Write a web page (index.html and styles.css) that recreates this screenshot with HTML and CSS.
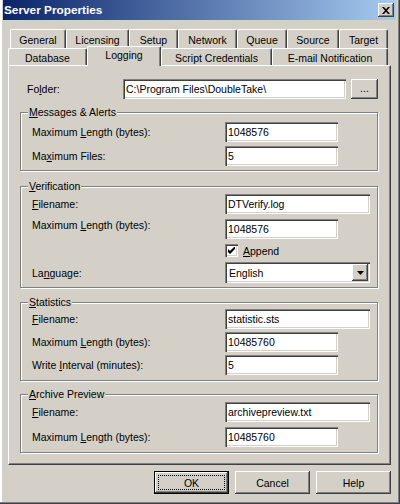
FILE: index.html
```html
<!DOCTYPE html>
<html>
	<head>
		<meta charset="UTF-8">
		<title>Server Properties</title>
		<link rel="stylesheet" href="styles.css">
	</head>
	<body>
		<div class="window">
			<div class="titlebar">
				<span class="title">Server Properties</span>
				<span class="close">
					<svg width="8" height="7" viewBox="0 0 8 7"><path d="M0 0h2l2 2.2 2-2.2h2l-3 3.5 3 3.5h-2l-2-2.2-2 2.2h-2l3-3.5z" fill="#000"/></svg>
				</span>
			</div>

			<div class="tabs">
				<div class="tabrow back">
					<div class="tab w56">General</div>
					<div class="tab w63">Licensing</div>
					<div class="tab w49">Setup</div>
					<div class="tab w59">Network</div>
					<div class="tab w50">Queue</div>
					<div class="tab w52">Source</div>
					<div class="tab w49">Target</div>
				</div>
				<div class="tabrow front">
					<div class="tab w79">Database</div>
					<div class="tab w74 active">Logging</div>
					<div class="tab w111">Script Credentials</div>
					<div class="tab w116">E-mail Notification</div>
				</div>
			</div>

			<div class="panel">
				<div class="folder-row">
					<span class="folder-lbl">Fo<u>l</u>der:</span>
					<input class="field w223" type="text" value="C:\Program Files\DoubleTake\" readonly>
					<span class="btn browse">...</span>
				</div>

				<!-- Messages & Alerts -->
				<div class="group g-msg">
					<span class="legend"><u>M</u>essages &amp; Alerts</span>
					<div class="row">
						<span class="lbl">Maximum <u>L</u>ength (bytes):</span>
						<input class="field short" type="text" value="1048576" readonly>
					</div>
					<div class="row">
						<span class="lbl">Ma<u>x</u>imum Files:</span>
						<input class="field short" type="text" value="5" readonly>
					</div>
				</div>

				<!-- Verification -->
				<div class="group g-ver">
					<span class="legend"><u>V</u>erification</span>
					<div class="row">
						<span class="lbl"><u>F</u>ilename:</span>
						<input class="field long" type="text" value="DTVerify.log" readonly>
					</div>
					<div class="row">
						<span class="lbl top">Maximum <u>L</u>ength (bytes):</span>
						<input class="field short" type="text" value="1048576" readonly>
					</div>
					<div class="row check-row">
						<span class="lbl"></span>
						<span class="checkbox">
							<svg width="7" height="7" viewBox="0 0 7 7"><path d="M0 2v3l2 2 5-5v-3l-5 5z" fill="#000"/></svg>
						</span>
						<span class="check-lbl"><u>A</u>ppend</span>
					</div>
					<div class="row lang-row">
						<span class="lbl">La<u>n</u>guage:</span>
						<div class="select">
							<span class="select-val">English</span>
							<span class="drop">
								<svg width="7" height="4" viewBox="0 0 7 4"><path d="M0 0h7l-3.5 4z" fill="#000"/></svg>
							</span>
						</div>
					</div>
				</div>

				<!-- Statistics -->
				<div class="group g-stat">
					<span class="legend"><u>S</u>tatistics</span>
					<div class="row">
						<span class="lbl"><u>F</u>ilename:</span>
						<input class="field long" type="text" value="statistic.sts" readonly>
					</div>
					<div class="row">
						<span class="lbl">Maximum <u>L</u>ength (bytes):</span>
						<input class="field short" type="text" value="10485760" readonly>
					</div>
					<div class="row">
						<span class="lbl">Write <u>I</u>nterval (minutes):</span>
						<input class="field short" type="text" value="5" readonly>
					</div>
				</div>

				<!-- Archive Preview -->
				<div class="group g-arch">
					<span class="legend"><u>A</u>rchive Preview</span>
					<div class="row">
						<span class="lbl"><u>F</u>ilename:</span>
						<input class="field long" type="text" value="archivepreview.txt" readonly>
					</div>
					<div class="row">
						<span class="lbl">Maximum <u>L</u>ength (bytes):</span>
						<input class="field short" type="text" value="10485760" readonly>
					</div>
				</div>
			</div>

			<div class="buttons">
				<span class="btn dlg default">OK</span>
				<span class="btn dlg">Cancel</span>
				<span class="btn dlg">Help</span>
			</div>
		</div>
	</body>
</html>
```

FILE: styles.css
```css
body {
	margin: 0;
	background: #d4d0c8;
	font-family: "Liberation Sans", Arial, sans-serif;
	font-size: 10.5px;
	color: #000;
}

.window {
	width: 400px;
	height: 504px;
	box-sizing: border-box;
	padding: 0 4px 0 3px;
	background: #d4d0c8;
	box-shadow: inset -1px -1px #404040, inset -2px -2px #808080, inset 2px 0 #fff;
	display: flex;
	flex-direction: column;
}

/* title bar */
.titlebar {
	height: 20px;
	display: flex;
	align-items: center;
	justify-content: space-between;
	padding: 0 2px 0 1px;
	background: linear-gradient(to right, #0a246a, #a6caf0);
	color: #fff;
	font-weight: bold;
	font-size: 11.8px;
}

.close {
	width: 16px;
	height: 14px;
	box-sizing: border-box;
	background: #d4d0c8;
	box-shadow: inset -1px -1px #404040, inset 1px 1px #fff, inset -2px -2px #808080;
	display: flex;
	align-items: center;
	justify-content: center;
	padding-right: 1px;
}

/* tabs */
.tabs {
	margin-top: 9px;
}

.tabrow {
	display: flex;
}

.tabrow.back {
	margin-left: 7px;
	height: 19px;
}

.tabrow.front {
	margin-left: 5px;
	height: 17px;
}

.tab {
	box-sizing: border-box;
	height: 100%;
	border-top: 1px solid #fff;
	border-left: 1px solid #fff;
	border-right: 1px solid #404040;
	border-radius: 2px 2px 0 0;
	box-shadow: inset -1px 0 #808080;
	display: flex;
	justify-content: center;
	padding-top: 3px;
	background: #d4d0c8;
}

.back .tab {
	padding-top: 4px;
}

.tab.active {
	position: relative;
	z-index: 1;
	height: 20px;
	margin-top: -2px;
	padding-top: 2px;
}

.w49 { width: 49px; }
.w50 { width: 50px; }
.w52 { width: 52px; }
.w56 { width: 56px; }
.w59 { width: 59px; }
.w63 { width: 63px; }
.w74 { width: 74px; }
.w79 { width: 79px; }
.w111 { width: 111px; }
.w116 { width: 116px; }

/* tab page */
.panel {
	margin-left: 5px;
	width: 383px;
	height: 400px;
	box-sizing: border-box;
	border-top: 1px solid #fff;
	border-left: 1px solid #fff;
	border-right: 1px solid #404040;
	border-bottom: 1px solid #404040;
	box-shadow: inset -1px -1px #808080;
	padding: 13px 0 0 11px;
}

.folder-row {
	display: flex;
	align-items: center;
	height: 20px;
}

.folder-lbl {
	width: 96px;
	margin-left: 7px;
}

.field {
	box-sizing: border-box;
	height: 20px;
	border: none;
	margin: 0;
	padding: 0 0 0 3px;
	background: #fff;
	font: inherit;
	color: #000;
	outline: none;
	box-shadow: inset 1px 1px #808080, inset 2px 2px #404040, inset -1px -1px #fff, inset -2px -2px #d4d0c8;
}

.w223 { width: 223px; }
.short { width: 113px; }
.long { width: 145px; }

.btn {
	box-sizing: border-box;
	background: #d4d0c8;
	box-shadow: inset -1px -1px #404040, inset 1px 1px #fff, inset -2px -2px #808080;
	display: flex;
	align-items: center;
	justify-content: center;
}

.browse {
	width: 27px;
	height: 20px;
	margin-left: 5px;
	padding-bottom: 2px;
}

/* group boxes */
.group {
	position: relative;
	width: 358px;
	box-sizing: border-box;
	border: 1px solid #808080;
	box-shadow: inset 1px 1px #fff, 1px 1px #fff;
	padding-left: 11px;
	display: flex;
	flex-direction: column;
}

.legend {
	position: absolute;
	top: -7px;
	left: 7px;
	padding: 0 1px;
	line-height: 12px;
	background: #d4d0c8;
}

.g-msg {
	margin-top: 13px;
	height: 59px;
	padding-top: 9px;
	gap: 4px;
}

.g-ver {
	margin-top: 15px;
	height: 102px;
	padding-top: 7px;
}

.g-stat {
	margin-top: 14px;
	height: 79px;
	padding-top: 6px;
	gap: 3px;
}

.g-arch {
	margin-top: 13px;
	height: 59px;
	padding-top: 7px;
	gap: 5px;
}

.row {
	display: flex;
	align-items: center;
	height: 20px;
	flex-shrink: 0;
}

.lbl {
	width: 193px;
	flex-shrink: 0;
	line-height: 12px;
}

.lbl.top {
	align-self: flex-start;
}

.g-ver .row + .row {
	margin-top: 5px;
}

.g-ver .check-row {
	height: 13px;
	margin-top: 4px;
}

.g-ver .lang-row {
	height: 21px;
	margin-top: 7px;
}

.checkbox {
	width: 13px;
	height: 13px;
	box-sizing: border-box;
	background: #fff;
	box-shadow: inset 1px 1px #808080, inset 2px 2px #404040, inset -1px -1px #fff, inset -2px -2px #d4d0c8;
	display: flex;
	align-items: center;
	justify-content: center;
}

.check-lbl {
	margin-left: 5px;
}

.select {
	width: 145px;
	height: 21px;
	box-sizing: border-box;
	background: #fff;
	box-shadow: inset 1px 1px #808080, inset 2px 2px #404040, inset -1px -1px #fff, inset -2px -2px #d4d0c8;
	display: flex;
	align-items: center;
	justify-content: space-between;
	padding: 2px;
}

.select-val {
	padding-left: 2px;
}

.drop {
	width: 16px;
	height: 17px;
	box-sizing: border-box;
	background: #d4d0c8;
	box-shadow: inset -1px -1px #404040, inset 1px 1px #fff, inset -2px -2px #808080;
	display: flex;
	align-items: center;
	justify-content: center;
}

/* dialog buttons */
.buttons {
	display: flex;
	justify-content: flex-end;
	gap: 6px;
	margin: 6px 0 0 5px;
	width: 383px;
}

.dlg {
	width: 75px;
	height: 23px;
}

.default {
	position: relative;
	border: 1px solid #000;
}

.default::after {
	content: "";
	position: absolute;
	left: 3px;
	top: 3px;
	right: 3px;
	bottom: 3px;
	border: 1px dotted #000;
}
```
